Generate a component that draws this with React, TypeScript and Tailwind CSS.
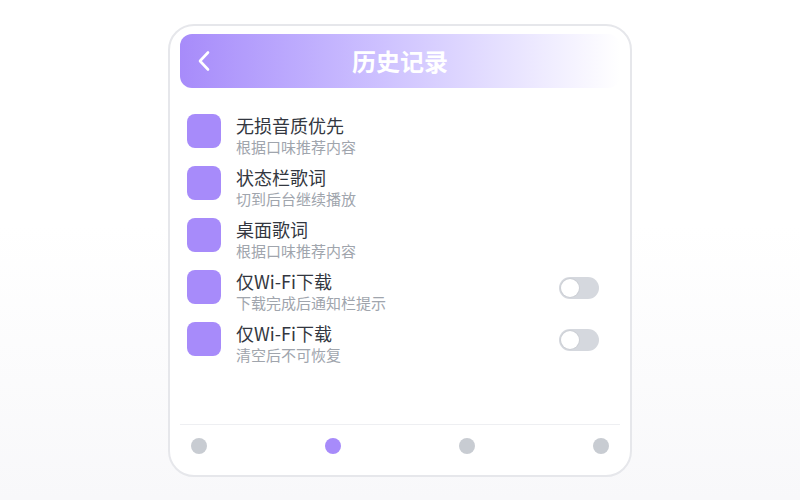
import React from "react";

type Item = { title: string; desc: string; toggle?: boolean };

const items: Item[] = [
  { title: "无损音质优先", desc: "根据口味推荐内容" },
  { title: "状态栏歌词", desc: "切到后台继续播放" },
  { title: "桌面歌词", desc: "根据口味推荐内容" },
  { title: "仅Wi-Fi下载", desc: "下载完成后通知栏提示", toggle: true },
  { title: "仅Wi-Fi下载", desc: "清空后不可恢复", toggle: true },
];

function Toggle() {
  return (
    <div className="mt-[7px] flex h-[22px] w-[40px] items-center rounded-full bg-[#d5d8de] px-[2px]">
      <div className="h-[18px] w-[18px] rounded-full bg-white shadow-[0_0_0_1px_rgba(0,0,0,0.04)]" />
    </div>
  );
}

export default function App() {
  return (
    <div
      className="flex h-[500px] w-full items-center justify-center bg-gradient-to-b from-white from-45% to-[#f8f8fa]"
      style={{ fontFamily: '"Noto Sans CJK SC", "Noto Sans", sans-serif' }}
    >
      {/* Phone card */}
      <div className="flex h-[453px] w-[464px] flex-col rounded-[26px] border-2 border-[#e6e7eb] bg-white px-[10px] pb-[10px] pt-[8px]">
        {/* Header */}
        <div className="relative flex h-[54px] shrink-0 items-center justify-center rounded-[12px] bg-gradient-to-r from-[#a78bfa] to-[#ffffff]">
          <svg
            className="absolute left-[17px] top-[16px]"
            width="14"
            height="22"
            viewBox="0 0 14 22"
            fill="none"
          >
            <path
              d="M11 2.5 L3 11 L11 19.5"
              stroke="white"
              strokeWidth="2.6"
              strokeLinecap="round"
              strokeLinejoin="round"
            />
          </svg>
          <h1 className="text-[24px] font-bold leading-none text-white">历史记录</h1>
        </div>

        {/* Settings list */}
        <div className="mt-[26px] flex flex-1 flex-col gap-[9px] pl-[7px] pr-[21px]">
          {items.map((item, i) => (
            <div key={i} className="flex items-start">
              <div className="h-[34px] w-[34px] shrink-0 rounded-[8px] bg-[#a78bfa]" />
              <div className="-mt-[1px] ml-[15px] flex flex-1 flex-col">
                <div className="text-[18px] leading-[24px] text-[#333740]">{item.title}</div>
                <div className="text-[15px] leading-[20px] text-[#a0a5ad]">{item.desc}</div>
              </div>
              {item.toggle && <Toggle />}
            </div>
          ))}
        </div>

        {/* Bottom nav */}
        <div className="flex shrink-0 items-center justify-between border-t border-[#eeeff2] px-[11px] pb-[11px] pt-[13px]">
          <div className="h-[16px] w-[16px] rounded-full bg-[#c8ccd2]" />
          <div className="h-[16px] w-[16px] rounded-full bg-[#a78bfa]" />
          <div className="h-[16px] w-[16px] rounded-full bg-[#c8ccd2]" />
          <div className="h-[16px] w-[16px] rounded-full bg-[#c8ccd2]" />
        </div>
      </div>
    </div>
  );
}
